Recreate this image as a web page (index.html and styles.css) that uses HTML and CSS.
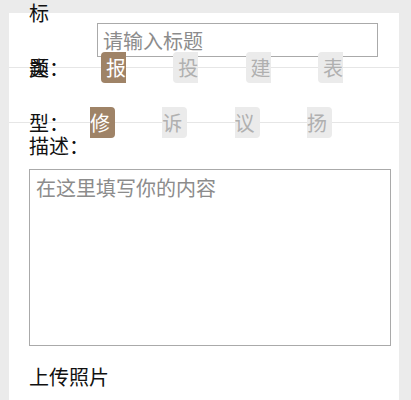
FILE: index.html
```html
<!DOCTYPE html>
<html lang="zh-CN">
<head>
  <meta charset="UTF-8" />
  <meta name="viewport" content="width=device-width, initial-scale=1.0"/>
  <title>报事报修</title>
  <link rel="stylesheet" href="styles.css">
</head>
<body>
  <div class="panel">
    <div class="row">
      <label class="label">标题：</label>
      <input class="title-input" type="text" placeholder="请输入标题">
    </div>

    <div class="row">
      <label class="label">类型：</label>
      <div class="types">
        <div class="opt"><span class="tag active">报修</span></div>
        <div class="opt"><span class="tag">投诉</span></div>
        <div class="opt"><span class="tag">建议</span></div>
        <div class="opt"><span class="tag">表扬</span></div>
      </div>
    </div>

    <div class="block">
      <div class="block-label">描述：</div>
      <textarea class="desc" placeholder="在这里填写你的内容"></textarea>
    </div>

    <div class="block">
      <div class="block-label">上传照片</div>
    </div>
  </div>
</body>
</html>
```

FILE: styles.css
```css
* {
  box-sizing: border-box;
  margin: 0;
  padding: 0;
}

html, body {
  height: 100%;
}

body {
  font-family: "Noto Sans CJK SC", "Noto Sans", sans-serif;
  font-size: 20px;
  color: #111;
  background: #ebebeb;
  padding: 13px 12px 0 9px;
}

.panel {
  background: #fff;
  min-height: 100%;
}

/* form rows */
.row {
  display: flex;
  align-items: center;
  height: 55px;
  line-height: 55px;
  padding: 0 8px 0 20px;
  border-bottom: 1px solid #e6e6e6;
}

.label,
.block-label {
  font-family: "Noto Sans CJK JP", "Noto Sans CJK SC", sans-serif;
}

.label {
  flex: 0 0 34px;
  width: 34px;
}

.title-input {
  flex: 1;
  min-width: 0;
  height: 34px;
  margin: 0 13px 0 34px;
  padding: 0 5px;
  border: 1px solid #aaa;
  font-family: inherit;
  font-size: 20px;
  color: #333;
  outline: none;
}

.title-input::placeholder,
.desc::placeholder {
  color: #8c8c8c;
}

/* type picker */
.types {
  flex: 1;
  display: flex;
  margin: 0 12px 0 27px;
}

.opt {
  flex: 0 0 40px;
  margin-right: 32.3px;
}

.tag {
  margin-left: 11px;
  padding: 1px 5px;
  border-radius: 4px;
  background: #ebebeb;
  color: #b0b0b0;
}

.tag.active {
  background: #9f8367;
  color: #fff;
}

/* description + photos */
.block {
  padding: 0 8px 0 20px;
}

.block-label {
  line-height: 45px;
}

.desc {
  display: block;
  width: 100%;
  height: 177px;
  margin: 1px 0 8px;
  padding: 3px 6px;
  border: 1px solid #aaa;
  font-family: inherit;
  font-size: 20px;
  resize: none;
  outline: none;
}
```
